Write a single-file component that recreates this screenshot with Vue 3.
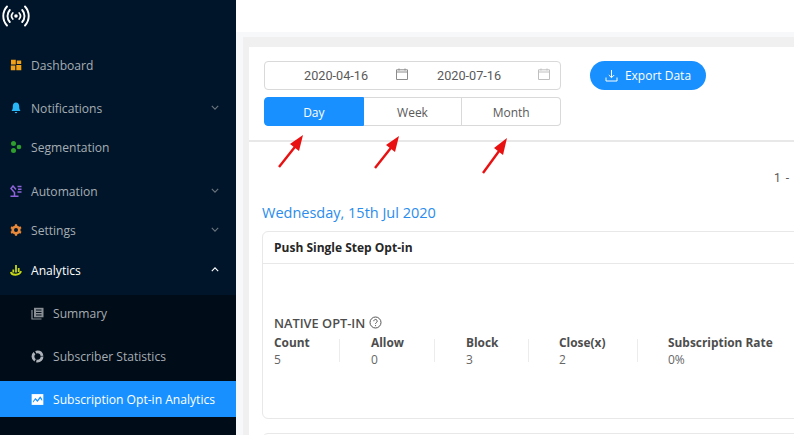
<template>
  <div class="page">
    <aside class="sidebar">
      <div class="logo">
        <svg width="28" height="24" viewBox="0 0 28 24" fill="none" stroke="#fff" stroke-linecap="round">
          <circle cx="14" cy="12" r="1.800" fill="#fff" stroke="none" />
          <path d="M10.800 9a4.500 4.500 0 0 0 0 6M17.200 9a4.500 4.500 0 0 1 0 6" stroke-width="1.700" />
          <path d="M7.800 6a9 9 0 0 0 0 12M20.200 6a9 9 0 0 1 0 12" stroke-width="1.900" />
          <path d="M5 2.500a14 14 0 0 0 0 19M23 2.500a14 14 0 0 1 0 19" stroke-width="1.900" />
        </svg>
      </div>

      <nav class="menu">
        <div class="item">
          <svg class="icon" viewBox="0 0 12 12" fill="#f0a116"><path d="M1 .8h4.800v4.700H1zM6.800 1.500h4.400v3.600H6.800zM.8 6.500h4.500v4.700H.8zM6.300 6h5v5.200h-5z" /></svg>
          Dashboard
        </div>
        <div class="item sub near">
          <svg class="icon" viewBox="0 0 12 12" fill="#29b6f6"><path d="M6 .5c-2 0-3.200 1.600-3.200 3.600 0 2.400-.3 3.800-1.300 5h9c-1-1.200-1.300-2.600-1.300-5C9.200 2.100 8 .5 6 .5zM4.800 10h2.400a1.200 1.200 0 0 1-2.400 0z" /></svg>
          Notifications
          <svg class="caret" viewBox="0 0 10 6"><path d="M1 1l4 4 4-4" /></svg>
        </div>
        <div class="item tight">
          <svg class="icon" viewBox="0 0 12 12" fill="#2e9e2e"><circle cx="3.500" cy="2.500" r="2.500" /><circle cx="3.500" cy="9.500" r="2.500" /><circle cx="9" cy="6" r="2.300" /></svg>
          Segmentation
        </div>
        <div class="item sub far">
          <svg class="icon" viewBox="0 0 12 12" fill="none" stroke="#8e63dc" stroke-width="1.500"><path d="M.5 11.300h8M4.500 11V7.500L1 3.500 3 1l3 3.500M7.500 1.500h4M8 4.300h3.500M7.500 7h4" /></svg>
          Automation
          <svg class="caret" viewBox="0 0 10 6"><path d="M1 1l4 4 4-4" /></svg>
        </div>
        <div class="item sub tight">
          <svg class="icon" viewBox="0 0 12 12"><circle cx="6" cy="6" r="3.300" fill="none" stroke="#e8883a" stroke-width="2.600" /><path d="M6 .3v2.200M6 9.500v2.200M1 3.200l1.900 1.100M9.100 7.700L11 8.800M1 8.800l1.900-1.100M9.100 4.300L11 3.200" stroke="#e8883a" stroke-width="2.200" /></svg>
          Settings
          <svg class="caret" viewBox="0 0 10 6"><path d="M1 1l4 4 4-4" /></svg>
        </div>
        <div class="item sub open">
          <svg class="icon" viewBox="0 0 12 12" fill="none" stroke="#c6d816" stroke-width="1.800"><path d="M.8 8c1 3.800 8.500 3.800 10.400-.8M3.300 8.500V5.500M6 8.500V1M8.700 8V4" /></svg>
          Analytics
          <svg class="caret up" viewBox="0 0 10 6"><path d="M1 5l4-4 4 4" /></svg>
        </div>

        <div class="submenu">
          <div class="subitem">
            <svg class="icon" viewBox="0 0 13 13"><path d="M3 .8h9.500v9.500H3z" fill="#8a8f96" /><path d="M5 3h5.500M5 5.500h5.500M5 8h5.500" stroke="#05101c" stroke-width="1.100" /><path d="M1 3v9h9.500" fill="none" stroke="#8a8f96" stroke-width="1.200" /></svg>
            Summary
          </div>
          <div class="subitem">
            <svg class="icon" viewBox="0 0 12 12" fill="none" stroke="#aeb3b9" stroke-width="2.600"><circle cx="6" cy="6" r="4.200" stroke-dasharray="7.500 1.300" /></svg>
            Subscriber Statistics
          </div>
          <div class="subitem active">
            <svg class="icon" viewBox="0 0 12 12"><path d="M.6 1h10.800v10H.6z" fill="#fff" /><path d="M1.800 7.500L4 4.500l2 2L8.500 3l1.800 2.500v1.800L8.500 5 6 8.300l-2-2L1.800 9z" fill="#1890ff" /></svg>
            Subscription Opt-in Analytics
          </div>
        </div>
      </nav>
    </aside>

    <main class="main">
      <header class="topbar"></header>
      <div class="content">
        <div class="panel">
          <div class="toolbar">
            <div class="filters">
              <div class="range">
                <div class="range-part">
                  <span>2020-04-16</span>
                  <svg class="cal" viewBox="0 0 12 12"><path d="M.5 1.800h11v9.700H.5zM.5 4h11M3 .5v2M9 .5v2" /></svg>
                </div>
                <div class="range-part">
                  <span>2020-07-16</span>
                  <svg class="cal light" viewBox="0 0 12 12"><path d="M.5 1.800h11v9.700H.5zM.5 4h11M3 .5v2M9 .5v2" /></svg>
                </div>
              </div>
              <div class="tabs">
                <button v-for="tab in tabs" :key="tab" class="tab" :class="{ selected: tab === 'Day' }">{{ tab }}</button>
              </div>
            </div>
            <button class="export">
              <svg width="13" height="13" viewBox="0 0 13 13" fill="none" stroke="#fff" stroke-width="1"><path d="M6.500 1v7.500M3.800 6l2.700 2.700L9.200 6M1 8.500v3.500h11V8.500" /></svg>
              Export Data
            </button>
          </div>

          <div class="pager">1 - 1 of 1</div>

          <div class="results">
            <h3 class="day-title">Wednesday, 15th Jul 2020</h3>
            <section class="card">
              <div class="card-head">Push Single Step Opt-in</div>
              <div class="card-body">
                <div class="stat-title">
                  NATIVE OPT-IN
                  <svg width="13" height="13" viewBox="0 0 13 13" fill="none" stroke="#555" stroke-width="1"><circle cx="6.500" cy="6.500" r="5.500" /><path d="M4.800 5.200a1.700 1.700 0 1 1 2.600 1.400c-.6.400-.9.700-.9 1.300" /><path d="M6.500 9.200v.9" /></svg>
                </div>
                <div class="stats">
                  <div v-for="stat in stats" :key="stat.label" class="stat" :class="stat.cls">
                    <div class="stat-label">{{ stat.label }}</div>
                    <div class="stat-value">{{ stat.value }}</div>
                  </div>
                </div>
              </div>
            </section>
            <section class="card next"></section>
          </div>

          <svg class="arrow a1" width="30" height="36" viewBox="0 0 30 36"><path d="M2 34L21 10" stroke="#e81010" stroke-width="2.400" /><path d="M26 2L13 11l9 7z" fill="#e81010" /></svg>
          <svg class="arrow a2" width="30" height="36" viewBox="0 0 30 36"><path d="M2 34L21 10" stroke="#e81010" stroke-width="2.400" /><path d="M26 2L13 11l9 7z" fill="#e81010" /></svg>
          <svg class="arrow a3" width="30" height="40" viewBox="0 0 30 40"><path d="M2 38L21 12" stroke="#e81010" stroke-width="2.400" /><path d="M26 3L13 13l9 7z" fill="#e81010" /></svg>
        </div>
      </div>
    </main>
  </div>
</template>

<script setup>
const tabs = ['Day', 'Week', 'Month']

const stats = [
  { label: 'Count', value: '5', cls: 'col-count' },
  { label: 'Allow', value: '0', cls: 'col-allow' },
  { label: 'Block', value: '3', cls: 'col-block' },
  { label: 'Close(x)', value: '2', cls: 'col-close' },
  { label: 'Subscription Rate', value: '0%', cls: 'col-rate' }
]
</script>

<style>
html,
body {
  margin: 0;
  overflow: hidden;
}
</style>

<style scoped>
.page {
  display: flex;
  width: 794px;
  height: 435px;
  overflow: hidden;
  font-family: "Open Sans", "Noto Sans", sans-serif;
  font-size: 12px;
  color: #595959;
  background: #fff;
}

.sidebar {
  flex: 0 0 236px;
  background: #001529;
  color: #a6adb4;
}

.logo {
  height: 45px;
  padding: 4px 0 0 2px;
  box-sizing: border-box;
}

.item {
  position: relative;
  display: flex;
  align-items: center;
  height: 40px;
  padding-left: 10px;
  color: #a6adb4;
  font-size: 12.100px;
}

.icon {
  flex: none;
  width: 12px;
  height: 12px;
  margin-right: 9px;
}

.near { margin-top: 3px; }
.tight { margin-top: -1px; }
.far { margin-top: 4px; }

.open {
  color: #fff;
}

.caret {
  position: absolute;
  right: 17px;
  top: 17px;
  width: 8px;
  height: 5px;
  fill: none;
  stroke: #69747f;
  stroke-width: 1.400;
}

.caret.up {
  stroke: #fff;
}

.submenu {
  background: #000c17;
  height: 145px;
}

.subitem {
  display: flex;
  align-items: center;
  height: 36px;
  padding-left: 31px;
  margin-bottom: 7px;
  color: #a6adb4;
  font-size: 12.100px;
  white-space: nowrap;
}

.subitem:first-child {
  margin-top: 5px;
}

.subitem .icon {
  width: 13px;
  height: 13px;
  margin-right: 9px;
}

.active {
  background: #1890ff;
  color: #fff;
}

.main {
  flex: 1;
  min-width: 0;
  display: flex;
  flex-direction: column;
  background: #f7f8f9;
}

.topbar {
  flex: 0 0 32px;
  background: #fff;
}

.content {
  flex: 1;
  margin: 5px 0 0 7px;
  padding: 10px 0 0 6px;
  background: #f0f0f0;
  min-height: 0;
}

.panel {
  position: relative;
  height: 100%;
  background: #fff;
}

.toolbar {
  display: flex;
  align-items: flex-start;
  gap: 29px;
  height: 95px;
  box-sizing: border-box;
  padding: 14px 0 0 15px;
  border-bottom: 2px solid #e8e8e8;
}

.filters {
  display: flex;
  flex-direction: column;
  gap: 7px;
  width: 297px;
}

.range {
  display: flex;
  height: 29px;
  box-sizing: border-box;
  border: 1px solid #d9d9d9;
  border-radius: 4px;
  color: #595959;
  font-family: "Roboto", sans-serif;
  font-size: 12.700px;
}

.range-part {
  display: flex;
  align-items: center;
  height: 100%;
}

.range-part:first-child {
  width: 149px;
  padding-left: 39px;
  gap: 28px;
  box-sizing: border-box;
}

.range-part:last-child {
  padding-left: 23px;
  gap: 37px;
}

.cal {
  width: 12px;
  height: 12px;
  margin-top: -3px;
  fill: none;
  stroke: #8c8c8c;
  stroke-width: 1;
}

.cal.light {
  stroke: #bfbfbf;
}

.tabs {
  display: flex;
  height: 29px;
}

.tab {
  flex: 1;
  padding: 1px 0 0;
  background: #fff;
  border: 1px solid #d9d9d9;
  border-left: 0;
  color: #595959;
  font-family: inherit;
  font-size: 12px;
}

.tab:first-child {
  border-radius: 4px 0 0 4px;
  border-left: 1px solid #d9d9d9;
}

.tab:last-child {
  border-radius: 0 4px 4px 0;
}

.tab.selected {
  background: #1890ff;
  border-color: #1890ff;
  color: #fff;
}

.export {
  display: flex;
  align-items: center;
  justify-content: center;
  gap: 7px;
  width: 116px;
  height: 29px;
  padding: 0;
  border: 0;
  border-radius: 15px;
  background: #1890ff;
  color: #fff;
  font-family: inherit;
  font-size: 12px;
}

.pager {
  margin: 27px 0 0 525px;
  height: 18px;
  line-height: 18px;
  font-family: "Roboto", sans-serif;
  font-size: 12px;
  word-spacing: 2px;
  white-space: nowrap;
}

.results {
  padding: 16px 0 0 13px;
}

.day-title {
  margin: 0;
  height: 20px;
  line-height: 20px;
  color: #2a8cec;
  font-size: 14.500px;
  font-weight: 400;
}

.card {
  box-sizing: border-box;
  width: 620px;
  height: 188px;
  margin-top: 8px;
  border: 1px solid #e8e8e8;
  border-radius: 6px;
}

.card.next {
  height: 20px;
  margin-top: 14px;
}

.card-head {
  height: 31px;
  padding-left: 11px;
  border-bottom: 1px solid #e8e8e8;
  line-height: 31px;
  color: #262626;
  font-size: 12px;
  font-weight: 700;
}

.card-body {
  padding: 48px 0 0 11px;
}

.stat-title {
  display: flex;
  align-items: center;
  gap: 4px;
  height: 21px;
  color: #4d4d4d;
  font-size: 12.800px;
  font-weight: 600;
}

.stats {
  display: flex;
}

.stat {
  position: relative;
  box-sizing: border-box;
  height: 38px;
  font-size: 12px;
}

.stat::after {
  content: "";
  position: absolute;
  right: 0;
  top: 6px;
  width: 1px;
  height: 23px;
  background: #ececec;
}

.col-count { width: 66px; margin-right: 31px; }
.col-allow { width: 64px; margin-right: 31px; }
.col-block { width: 63px; margin-right: 30px; }
.col-close { width: 79px; margin-right: 30px; }
.col-rate { width: 130px; }
.col-rate::after { display: none; }

.stat-label {
  height: 18px;
  line-height: 18px;
  color: #4d4d4d;
  font-size: 11.900px;
  font-weight: 700;
}

.stat-value {
  height: 18px;
  line-height: 18px;
  color: #666;
}

.arrow {
  position: absolute;
}

.a1 { left: 28px; top: 86px; }
.a2 { left: 124px; top: 87px; }
.a3 { left: 232px; top: 88px; }
</style>
